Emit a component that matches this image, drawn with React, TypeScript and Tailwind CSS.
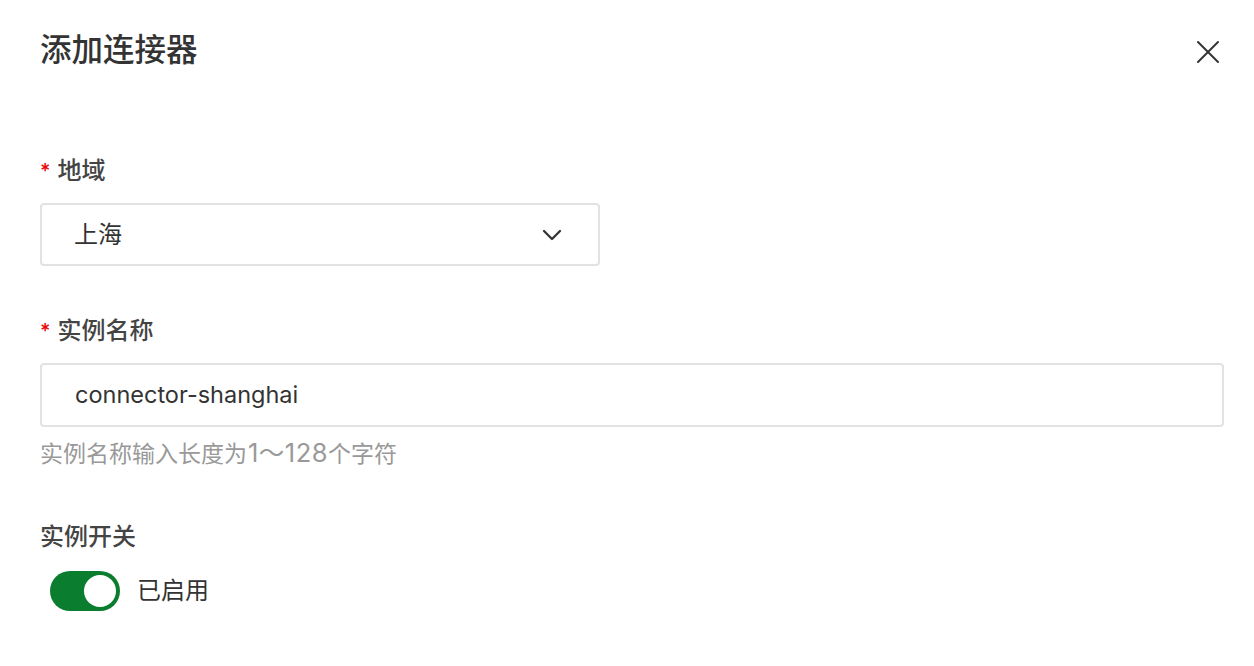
import { X, ChevronDown } from "lucide-react";

const font = {
  fontFamily: '"Inter", "Noto Sans CJK SC", sans-serif',
};

const Label = ({ text, required }: { text: string; required?: boolean }) => (
  <div className="flex items-center h-[30px] text-[24px] font-medium text-[#444]">
    {required && <span className="text-[#e00] mr-[7px] text-[20px] leading-none">*</span>}
    <span>{text}</span>
  </div>
);

const App = () => {
  return (
    <div className="w-[1254px] h-[666px] bg-white overflow-hidden" style={font}>
      {/* Header */}
      <div className="h-[104px] pl-[40px] pr-[26px] flex items-start justify-between pt-[29px]">
        <h1 className="text-[31.5px] leading-[42px] font-medium text-[#333]">添加连接器</h1>
        <button className="mt-[3px] text-[#333]" aria-label="关闭">
          <X className="w-[40px] h-[40px]" strokeWidth={1.2} />
        </button>
      </div>

      <div className="px-[40px] pt-[52px]">
        {/* Region */}
        <Label text="地域" required />
        <div className="mt-[17px] w-[560px] h-[63px] border-2 border-[#e2e2e2] rounded-[4px] flex items-center justify-between pl-[32px] pr-[30px]">
          <span className="text-[24px] text-[#333]">上海</span>
          <ChevronDown className="w-[32px] h-[32px] text-[#333]" strokeWidth={1.7} />
        </div>

        {/* Instance name */}
        <div className="mt-[50px]">
          <Label text="实例名称" required />
        </div>
        <div className="mt-[17px] w-[1184px] h-[64px] border-2 border-[#e2e2e2] rounded-[4px] flex items-center pl-[33px]">
          <span className="text-[23.5px] text-[#333]">connector-shanghai</span>
        </div>
        <div className="mt-[11px] text-[23px] leading-[30px] text-[#999]">
          实例名称输入长度为<span className="text-[25.5px] tracking-[0.5px] ml-[1px]">1～128</span>个字符
        </div>

        {/* Switch */}
        <div className="mt-[53px]">
          <Label text="实例开关" />
        </div>
        <div className="mt-[19px] flex items-center pl-[10px]">
          <div className="w-[70px] h-[40px] rounded-full bg-[#0b7d2e] flex items-center justify-end pr-[4px]">
            <div className="w-[32px] h-[32px] rounded-full bg-white" />
          </div>
          <span className="ml-[17px] text-[24px] text-[#333]">已启用</span>
        </div>
      </div>
    </div>
  );
};

export default App;
